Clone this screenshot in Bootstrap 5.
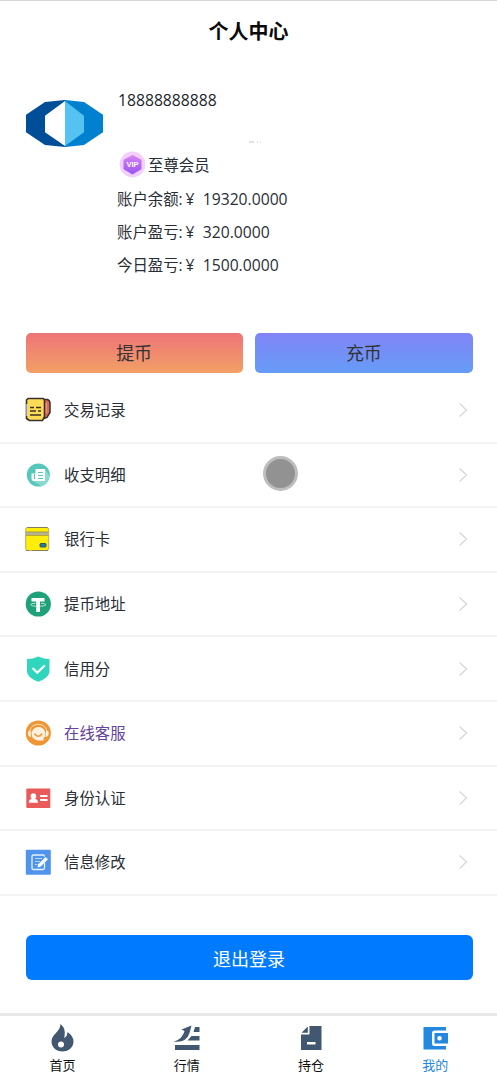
<!DOCTYPE html>
<html lang="zh-CN">
<head>
<meta charset="utf-8">
<meta name="viewport" content="width=device-width, initial-scale=1">
<title>个人中心</title>
<link href="https://cdn.jsdelivr.net/npm/bootstrap@5.3.0/dist/css/bootstrap.min.css" rel="stylesheet">
<script src="https://cdn.jsdelivr.net/npm/bootstrap@5.3.0/dist/js/bootstrap.bundle.min.js" defer></script>
<style>
  body { font-family: "Open Sans", "Noto Sans CJK SC", sans-serif; font-size: 15.4px; line-height: 20px; color: #292d35; background: #fff; height: 1076px; overflow: hidden; }
  .page-title { height: 62px; border-top: 1px solid #d6d6d6; font-size: 20px; font-weight: 700; color: #0b0b0b; }
  .profile { height: 271px; padding: 28px 25px 0; }
  .avatar { width: 78px; height: 47px; margin: 10px 13px 0 1px; }
  .phone { height: 44px; font-size: 15.7px; color: #20242b; margin-left: 1px; line-height: 20px; }
  .profile-line { height: 33px; white-space: pre; }
  .vip-line { height: 35px; padding-bottom: 7px; }
  .profile-line .amount { font-size: 15.7px; margin-left: 3px; }
  .vip { width: 27px; height: 27px; margin: 0 2px 0 2px; }
  .smudge { left: 249px; top: 141px; }
  .actions { padding: 0 24.5px 0 25.5px; height: 46px; gap: 12.5px; }
  .btn-coin { height: 40px; border: 0; border-radius: 5px; font-size: 18px; line-height: 20px; color: #333; padding: 0; }
  .btn-withdraw { background: linear-gradient(#ee7478, #f2a066); }
  .btn-deposit { background: linear-gradient(#8184f7, #659cf6); }
  .menu .list-group-item, .menu.list-group-flush > .list-group-item:last-child { height: 64.6px; border: 0; border-bottom: 2px solid #f3f3f5; padding: 0 29px 0 25px; color: #292d35; }
  .menu.list-group-flush > .visited { color: #65429b; }
  .menu span { padding-top: 2px; }
  .menu .icon { width: 26px; height: 26px; margin-right: 13px; }
  .chevron { width: 10px; height: 16px; }
  .logout { height: 45px; margin: 39px 24.5px 0 25.5px; border: 0; border-radius: 6px; background: #007bff; color: #fff; font-size: 18px; line-height: 20px; padding: 3px 0 0; }
  .tabs { height: 63px; border-top: 3px solid #e7e7e7; font-size: 13px; background: #fff; }
  .tabs .nav-link { color: #111; padding: 7px 0 0 1px; line-height: 18px; }
  .tabs .nav-link.active { color: #2488df; }
  .tabs svg { width: 28px; height: 30px; margin-bottom: 3px; }
  .touch { left: 263px; top: 456px; width: 35px; height: 35px; border: 3px solid #bdbdbd; background: #929292; }
</style>
</head>
<body class="d-flex flex-column position-relative">
<header class="page-title d-flex align-items-center justify-content-center flex-shrink-0">个人中心</header>

<section class="profile d-flex flex-shrink-0">
  <svg class="avatar flex-shrink-0" viewBox="0 0 78 48" preserveAspectRatio="none">
    <path fill="#004e97" d="M39 0 19 2 0 15v18l19 13 20 2z"/>
    <path fill="#0081cf" d="M39 0 58 2l19 13v18L58 46l-19 2z"/>
    <path fill="#fff" d="M39 1 19 16v17l20 14z"/>
    <path fill="#55c2f1" d="M39 1 58 16v17L39 47z"/>
  </svg>
  <div>
    <div class="phone">18888888888</div>
    <div class="profile-line vip-line d-flex align-items-center mt-3"><svg class="vip" viewBox="0 0 27 27">
      <defs><linearGradient id="vg" x2="0" y2="1"><stop stop-color="#d783f3"/><stop offset="1" stop-color="#9955f5"/></linearGradient></defs>
      <circle cx="13.500" cy="13.500" r="12.900" fill="#f3d0fc"/><path d="M13.500 4.500 22 9v9l-8.500 5L5 18V9z" fill="url(#vg)" stroke="url(#vg)" stroke-width="1" stroke-linejoin="round"/>
      <text x="13.500" y="15.800" text-anchor="middle" fill="#fff" font-family="Liberation Sans" font-weight="700" font-size="7.500">VIP</text></svg><span class="pt-1">至尊会员</span></div>
    <div class="profile-line pt-1">账户余额:<span class="amount">¥  19320.0000</span></div>
    <div class="profile-line pt-1">账户盈亏:<span class="amount">¥  320.0000</span></div>
    <div class="profile-line pt-1">今日盈亏:<span class="amount">¥  1500.0000</span></div>
  </div>
</section>
<svg class="smudge position-absolute" width="12" height="2"><path d="M0 1h5M8 1h1M11 1h1" stroke="#c5c5c5"/></svg>

<div class="actions d-flex flex-shrink-0">
  <button class="btn btn-coin btn-withdraw flex-fill">提币</button>
  <button class="btn btn-coin btn-deposit flex-fill">充币</button>
</div>

<div class="menu list-group list-group-flush flex-shrink-0">
  <a class="list-group-item d-flex align-items-center"><svg class="icon" viewBox="0 0 26 26">
    <path d="M19 2.500h3.500q2.500 1 2.500 4v9l-3 5-3 1z" fill="#dd6b57" stroke="#39302e" stroke-width="1.500"/><path d="M21 6v10" stroke="#ef9b88" stroke-width="1.500"/>
    <path d="M3 1.500h15.500l1 2v16l-2 4H4.500l-3-2V3z" fill="#fcdb57" stroke="#39302e" stroke-width="1.600" stroke-linejoin="round"/>
    <path d="M2 7v12" stroke="#fff" stroke-width="1"/><path d="M5 10.500h4m2 0h5M5 14h6m2 0h3M5 18h11" stroke="#39302e" stroke-width="1.500"/></svg>
    <span>交易记录</span><svg class="chevron ms-auto" viewBox="0 0 10 16"><path d="m1.500 1.500 7 6.500-7 6.500" fill="none" stroke="#d9d9db" stroke-width="1.400"/></svg></a>
  <a class="list-group-item d-flex align-items-center"><svg class="icon" viewBox="0 0 26 26">
    <circle cx="13.300" cy="13" r="11.500" fill="#55c8bb"/><path d="m20 7 4.500 7q-1 8-8 10L8 19z" fill="#8bdbd2"/>
    <path d="M10.500 7H20v12H8.500q-2-.5-2-2.500v-5h4z" fill="#fff"/><path d="M9.500 12v5M13 10.500h5M13 13.500h5M13 16.500h5" stroke="#55c8bb" stroke-width="1.100"/></svg>
    <span>收支明细</span><svg class="chevron ms-auto" viewBox="0 0 10 16"><path d="m1.500 1.500 7 6.500-7 6.500" fill="none" stroke="#d9d9db" stroke-width="1.400"/></svg></a>
  <a class="list-group-item d-flex align-items-center"><svg class="icon" viewBox="0 0 26 26">
    <rect x=".7" y="1.500" width="23" height="23" rx="2" fill="#ffee08" stroke="#c6a469"/><path d="M2 1.500h20.500" stroke="#8d7960"/><path d="M1 7.500h22.500" stroke="#b8b49d" stroke-width="2.800"/><path d="M1 9.300h22.500M1 6h22.500" stroke="#81764f" stroke-width=".7"/><path d="M1 24.500h3m3 0h16" stroke="#8b7c62"/>
    <rect x="15" y="17.500" width="6" height="3.500" rx=".7" fill="#277f9a" stroke="#315264"/></svg>
    <span>银行卡</span><svg class="chevron ms-auto" viewBox="0 0 10 16"><path d="m1.500 1.500 7 6.500-7 6.500" fill="none" stroke="#d9d9db" stroke-width="1.400"/></svg></a>
  <a class="list-group-item d-flex align-items-center"><svg class="icon" viewBox="0 0 26 26">
    <circle cx="13.300" cy="13" r="12.600" fill="#1fa27b"/><path d="M6.500 7h13v3.500H15V21h-3.800V10.500H6.500z" fill="#fff"/><path d="M10.500 12.200q-4.800.3-4.800 1.500 1 1.500 5.500 1.600m3.800 0q5-.1 6-1.600 0-1.200-5-1.500" fill="none" stroke="#d9f1e9" stroke-width=".8"/></svg>
    <span>提币地址</span><svg class="chevron ms-auto" viewBox="0 0 10 16"><path d="m1.500 1.500 7 6.500-7 6.500" fill="none" stroke="#d9d9db" stroke-width="1.400"/></svg></a>
  <a class="list-group-item d-flex align-items-center"><svg class="icon" viewBox="0 0 26 26">
    <path d="M13.300.5Q19 3 24.500 3v12.500q0 6-11.200 10.300Q2 21.500 2 15.500V3q6 0 11.300-2.500z" fill="#2fd5bc"/><path d="m8.300 12.800 4 4 6.800-6.800" fill="none" stroke="#fff" stroke-width="2.300" stroke-linecap="round" stroke-linejoin="round"/></svg>
    <span>信用分</span><svg class="chevron ms-auto" viewBox="0 0 10 16"><path d="m1.500 1.500 7 6.500-7 6.500" fill="none" stroke="#d9d9db" stroke-width="1.400"/></svg></a>
  <a class="list-group-item d-flex align-items-center visited"><svg class="icon" viewBox="0 0 26 26">
    <circle cx="13.300" cy="13" r="12.600" fill="#ef9735"/><path d="M5 10a8.800 8.500 0 0 1 16.600 0" fill="none" stroke="#ffe3c2" stroke-width="1"/><path d="M5.500 10q-3 1-2.500 4t3 3zm15.600 0q3 1 2.500 4t-3 3z" fill="#fff0df"/>
    <path d="M13.300 7a7 6.800 0 1 0 .5 13.600h5l-.5-2A7 6.800 0 0 0 13.300 7z" fill="#fff0df"/><path d="M9.800 14q3.500 4.500 7 0" fill="none" stroke="#ef9735" stroke-width="1.400" stroke-linecap="round"/></svg>
    <span>在线客服</span><svg class="chevron ms-auto" viewBox="0 0 10 16"><path d="m1.500 1.500 7 6.500-7 6.500" fill="none" stroke="#d9d9db" stroke-width="1.400"/></svg></a>
  <a class="list-group-item d-flex align-items-center"><svg class="icon" viewBox="0 0 26 26">
    <rect x="1.300" y="3.500" width="24" height="19.500" rx="1" fill="#ea5a58"/><path d="M8.300 8.300a3 3 0 0 1 1.700 5.500q3 .7 3 4H3.800q0-3.500 3-4A3 3 0 0 1 8.300 8.300zM15 10h7.500v1.900H15zm0 4h7.500v1.900H15z" fill="#fff"/></svg>
    <span>身份认证</span><svg class="chevron ms-auto" viewBox="0 0 10 16"><path d="m1.500 1.500 7 6.500-7 6.500" fill="none" stroke="#d9d9db" stroke-width="1.400"/></svg></a>
  <a class="list-group-item d-flex align-items-center"><svg class="icon" viewBox="0 0 26 26">
    <rect x=".8" y=".7" width="25" height="25" rx="1" fill="#5094eb"/><path d="M19.500 14v5q0 1.500-1.500 1.500H8.500Q7 20.500 7 19V7.500Q7 6 8.500 6H18q1.500 0 1.500 1.500" fill="none" stroke="#e7f2ff" stroke-width="1.300"/><path d="M10 9.500h7M10 12.500h5M10 15.500h2.500" stroke="#b6d5fb"/><path d="m12.500 18.500.8-3.300L20.500 8l2.500 2.200-7.300 7.200z" fill="#fff"/></svg>
    <span>信息修改</span><svg class="chevron ms-auto" viewBox="0 0 10 16"><path d="m1.500 1.500 7 6.500-7 6.500" fill="none" stroke="#d9d9db" stroke-width="1.400"/></svg></a>
</div>

<button class="btn logout flex-shrink-0">退出登录</button>

<nav class="tabs nav nav-fill flex-nowrap mt-auto flex-shrink-0">
  <a class="nav-link col-3 d-flex flex-column align-items-center"><svg viewBox="0 0 28 30"><path fill="#425770" fill-rule="evenodd" d="M12 1q4.500 3.500 4.300 9l-.5 5q3-1.500 3.200-6 6 4 6 9.500c0 6-5 10-11 10s-11-4-11-10c0-7 9-10 9-17.500zM12.500 18.500a3 3 0 1 0 0 6 3 3 0 0 0 0-6z" transform="translate(-.5)"/></svg>首页</a>
  <a class="nav-link col-3 d-flex flex-column align-items-center"><svg viewBox="0 0 28 30"><path fill="#425770" d="M2 22h24.500v5H2zM18.500 2.500 8.500 6.500l3 1.500C9.500 14 6 17.500.5 18.500q13 1.500 16-8.500zM22 4h4.500v5H20.500zM18.500 13h8v4.500h-12z"/></svg>行情</a>
  <a class="nav-link col-3 d-flex flex-column align-items-center"><svg viewBox="0 0 28 30"><path fill="#425770" fill-rule="evenodd" d="M12.500 3h12v24h-20.500V11.500h8.500zM10 19v2.500h8.500V19z"/><path d="M10.800 3.500V9.700H4.500z" fill="#425770"/></svg>持仓</a>
  <a class="nav-link active col-3 d-flex flex-column align-items-center"><svg viewBox="0 0 28 30"><path fill="#2488df" fill-rule="evenodd" d="M2 4h22.500v3.500H13q-2.500 0-2.500 2.500v10.500q0 2.500 2.500 2.500h11.500v3.500H2zM13 10h13.500v10.500H13zm5 3a2.300 2.300 0 1 0 0 4.600 2.300 2.300 0 0 0 0-4.600z" transform="translate(.5)"/></svg>我的</a>
</nav>
<div class="touch position-absolute rounded-circle"></div>
</body>
</html>
